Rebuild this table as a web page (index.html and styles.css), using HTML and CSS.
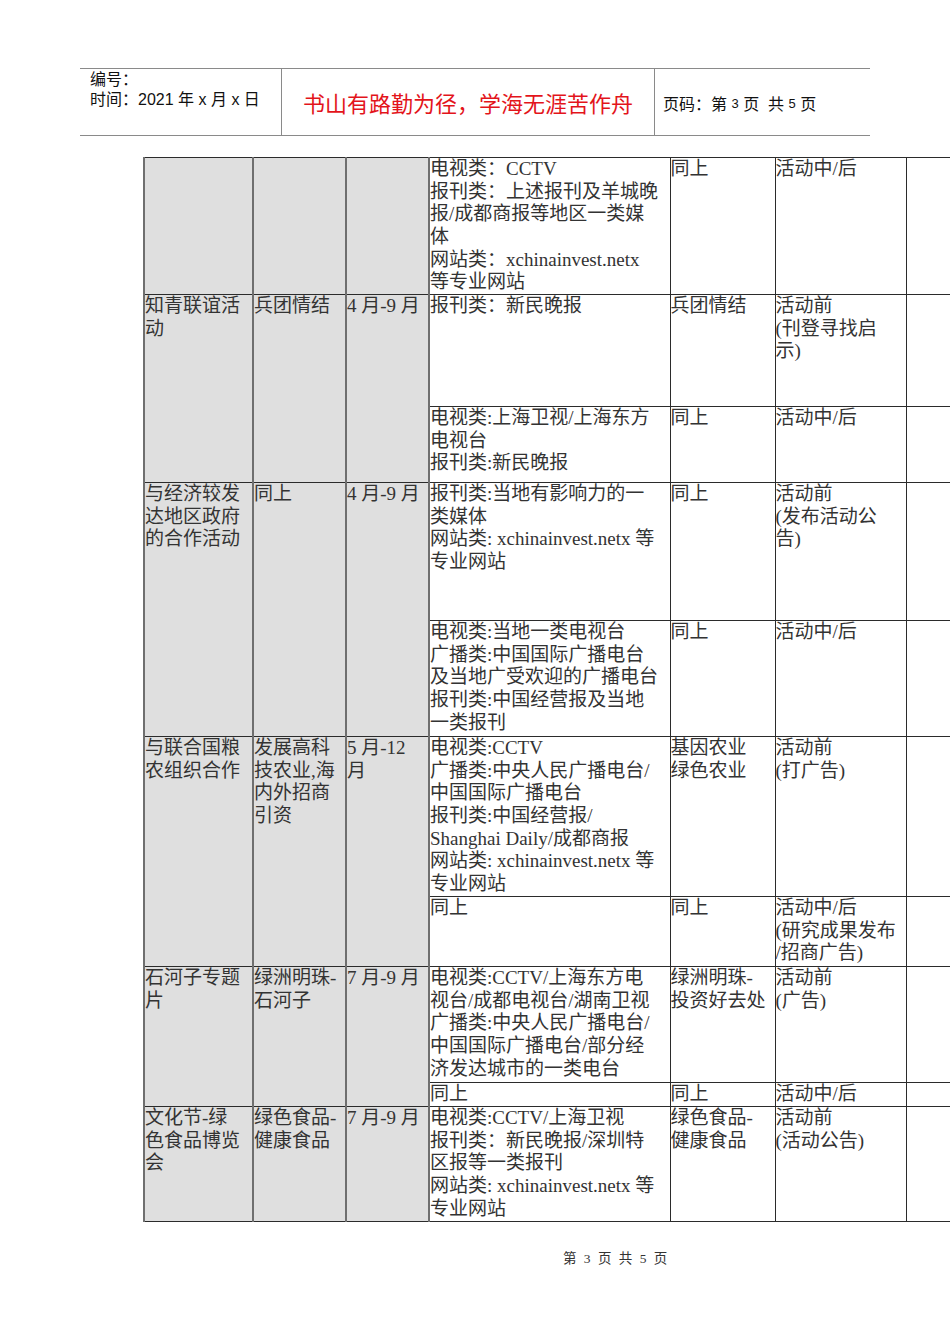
FILE: index.html
```html
<!DOCTYPE html>
<html lang="zh-CN">
<head>
<meta charset="utf-8">
<title>第 3 页 共 5 页</title>
<link rel="stylesheet" href="styles.css">
</head>
<body>
<div class="page">
  <header class="doc-header">
    <div class="hd-left">
      <div>编号：</div>
      <div>时间：2021 年 x 月 x 日</div>
    </div>
    <div class="hd-mid">书山有路勤为径，学海无涯苦作舟</div>
    <div class="hd-right">页码：第 <span class="num">3</span> 页&nbsp; 共 <span class="num">5</span> 页</div>
  </header>

  <table class="plan">
    <colgroup>
      <col class="c1"><col class="c2"><col class="c3"><col class="c4"><col class="c5"><col class="c6"><col class="c7">
    </colgroup>
    <tbody>
      <tr class="h136">
        <td class="g"></td><td class="g"></td><td class="g"></td>
        <td>电视类：CCTV<br>报刊类：上述报刊及羊城晚<br>报/成都商报等地区一类媒<br>体<br>网站类：xchinainvest.netx<br>等专业网站</td>
        <td>同上</td>
        <td>活动中/后</td>
        <td></td>
      </tr>
      <tr class="h112">
        <td class="g" rowspan="2">知青联谊活<br>动</td>
        <td class="g" rowspan="2">兵团情结</td>
        <td class="g" rowspan="2">4 月-9 月</td>
        <td>报刊类：新民晚报</td>
        <td>兵团情结</td>
        <td>活动前<br>(刊登寻找启<br>示)</td>
        <td></td>
      </tr>
      <tr class="h76">
        <td>电视类:上海卫视/上海东方<br>电视台<br>报刊类:新民晚报</td>
        <td>同上</td>
        <td>活动中/后</td>
        <td></td>
      </tr>
      <tr class="h138">
        <td class="g" rowspan="2">与经济较发<br>达地区政府<br>的合作活动</td>
        <td class="g" rowspan="2">同上</td>
        <td class="g" rowspan="2">4 月-9 月</td>
        <td>报刊类:当地有影响力的一<br>类媒体<br>网站类: xchinainvest.netx 等<br>专业网站</td>
        <td>同上</td>
        <td>活动前<br>(发布活动公<br>告)</td>
        <td></td>
      </tr>
      <tr class="h116">
        <td>电视类:当地一类电视台<br>广播类:中国国际广播电台<br>及当地广受欢迎的广播电台<br>报刊类:中国经营报及当地<br>一类报刊</td>
        <td>同上</td>
        <td>活动中/后</td>
        <td></td>
      </tr>
      <tr class="h160">
        <td class="g" rowspan="2">与联合国粮<br>农组织合作</td>
        <td class="g" rowspan="2">发展高科<br>技农业,海<br>内外招商<br>引资</td>
        <td class="g" rowspan="2">5 月-12<br>月</td>
        <td>电视类:CCTV<br>广播类:中央人民广播电台/<br>中国国际广播电台<br>报刊类:中国经营报/<br>Shanghai Daily/成都商报<br>网站类: xchinainvest.netx 等<br>专业网站</td>
        <td>基因农业<br>绿色农业</td>
        <td>活动前<br>(打广告)</td>
        <td></td>
      </tr>
      <tr class="h70">
        <td>同上</td>
        <td>同上</td>
        <td>活动中/后<br>(研究成果发布<br>/招商广告)</td>
        <td></td>
      </tr>
      <tr class="h116">
        <td class="g" rowspan="2">石河子专题<br>片</td>
        <td class="g" rowspan="2">绿洲明珠-<br>石河子</td>
        <td class="g" rowspan="2">7 月-9 月</td>
        <td>电视类:CCTV/上海东方电<br>视台/成都电视台/湖南卫视<br>广播类:中央人民广播电台/<br>中国国际广播电台/部分经<br>济发达城市的一类电台</td>
        <td>绿洲明珠-<br>投资好去处</td>
        <td>活动前<br>(广告)</td>
        <td></td>
      </tr>
      <tr class="h24">
        <td>同上</td>
        <td>同上</td>
        <td>活动中/后</td>
        <td></td>
      </tr>
      <tr class="h115">
        <td class="g">文化节-绿<br>色食品博览<br>会</td>
        <td class="g">绿色食品-<br>健康食品</td>
        <td class="g">7 月-9 月</td>
        <td>电视类:CCTV/上海卫视<br>报刊类：新民晚报/深圳特<br>区报等一类报刊<br>网站类: xchinainvest.netx 等<br>专业网站</td>
        <td>绿色食品-<br>健康食品</td>
        <td>活动前<br>(活动公告)</td>
        <td></td>
      </tr>
    </tbody>
  </table>

  <footer class="doc-footer">第 3 页 共 5 页</footer>
</div>
</body>
</html>
```

FILE: styles.css
```css
html, body {
  margin: 0;
  padding: 0;
  background: #ffffff;
}

.page {
  width: 950px;
  padding-top: 68px;
}

/* ---------- header ---------- */
.doc-header {
  margin-left: 80px;
  width: 790px;
  height: 66px;
  display: flex;
  border-top: 1px solid #8a8a8a;
  border-bottom: 1px solid #8a8a8a;
  font-family: "Liberation Sans", "Noto Sans CJK SC", sans-serif;
  font-size: 16px;
  color: #111;
}

.hd-left {
  width: 201px;
  padding: 1px 0 0 10px;
  box-sizing: border-box;
  line-height: 20px;
}

.hd-mid {
  width: 374px;
  border-left: 1px solid #8a8a8a;
  border-right: 1px solid #8a8a8a;
  display: flex;
  align-items: center;
  justify-content: center;
  box-sizing: border-box;
  color: #e3141b;
  font-size: 22px;
  font-family: "Noto Sans CJK SC", sans-serif;
}

.hd-right {
  flex: 1;
  padding-left: 8px;
  display: flex;
  align-items: center;
  padding-top: 2px;
  box-sizing: border-box;
  white-space: pre;
}

.hd-right .num {
  font-size: 13px;
}

/* ---------- table ---------- */
.plan {
  margin-top: 21px;
  margin-left: 143px;
  width: 806px;
  table-layout: fixed;
  border-collapse: collapse;
  font-family: "Liberation Serif", "Noto Sans CJK SC", serif;
  font-size: 19px;
  line-height: 22.67px;
  color: #333;
}

.c1 { width: 109px; }
.c2 { width: 93px; }
.c3 { width: 83px; }
.c4 { width: 241px; }
.c5 { width: 105px; }
.c6 { width: 131px; }
.c7 { width: 44px; }

.plan td {
  border: 1px solid #2b2b2b;
  vertical-align: top;
  padding: 0;
  overflow: hidden;
}

.plan td.g {
  background: #dfdfdf;
  border-left: 2px solid #6f6f6f;
  border-right: 2px solid #6f6f6f;
}

.plan td:last-child {
  border-right: 1px solid #9a9a9a;
}

.h136 { height: 134px; }
.h112 { height: 112px; }
.h76  { height: 76px; }
.h138 { height: 138px; }
.h116 { height: 116px; }
.h160 { height: 160px; }
.h70  { height: 70px; }
.h24  { height: 24px; }
.h115 { height: 115px; }

/* ---------- footer ---------- */
.doc-footer {
  margin-top: 25px;
  padding-left: 563px;
  font-family: "Liberation Serif", "Noto Sans CJK SC", serif;
  font-size: 13.5px;
  color: #333;
  word-spacing: 4px;
}
```
